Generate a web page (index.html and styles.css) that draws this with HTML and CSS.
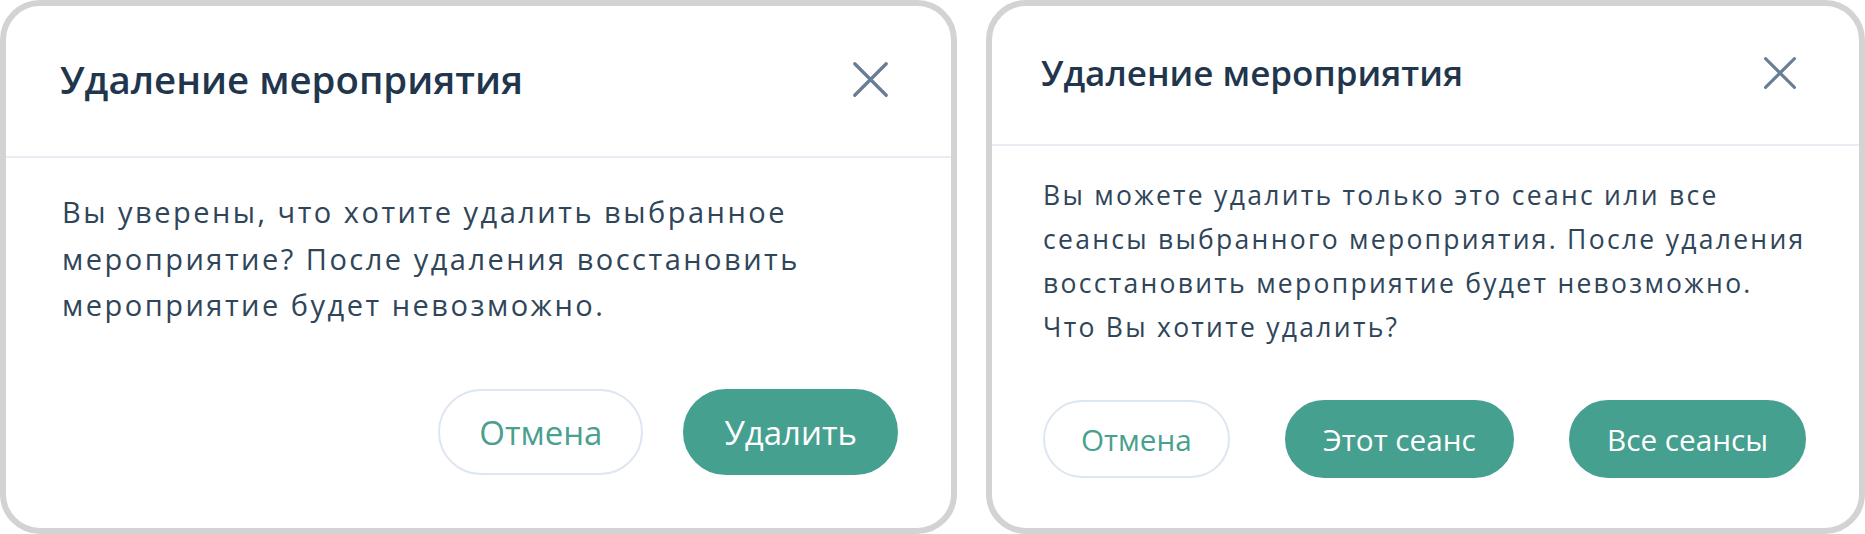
FILE: index.html
```html
<!DOCTYPE html>
<html lang="ru">
<head>
<meta charset="utf-8">
<title>Удаление мероприятия</title>
<link rel="stylesheet" href="styles.css">
</head>
<body>
<div class="page">
  <section class="dialog dialog--large">
    <header class="dialog__header">
      <h2 class="dialog__title">Удаление мероприятия</h2>
      <button class="dialog__close" aria-label="Закрыть">
        <svg viewBox="0 0 40 40" class="close-icon"><path d="M3 3 L37 37 M37 3 L3 37"/></svg>
      </button>
    </header>
    <div class="dialog__body">
      <p class="dialog__text">Вы уверены, что хотите удалить выбранное<br>мероприятие? После удаления восстановить<br>мероприятие будет невозможно.</p>
      <div class="dialog__actions dialog__actions--end">
        <button class="btn btn--outline">Отмена</button>
        <button class="btn btn--primary">Удалить</button>
      </div>
    </div>
  </section>
  <section class="dialog dialog--small">
    <header class="dialog__header">
      <h2 class="dialog__title">Удаление мероприятия</h2>
      <button class="dialog__close" aria-label="Закрыть">
        <svg viewBox="0 0 40 40" class="close-icon"><path d="M3 3 L37 37 M37 3 L3 37"/></svg>
      </button>
    </header>
    <div class="dialog__body">
      <p class="dialog__text">Вы можете удалить только это сеанс или все<br>сеансы выбранного мероприятия. После удаления<br>восстановить мероприятие будет невозможно.<br>Что Вы хотите удалить?</p>
      <div class="dialog__actions dialog__actions--spread">
        <button class="btn btn--outline">Отмена</button>
        <button class="btn btn--primary">Этот сеанс</button>
        <button class="btn btn--primary">Все сеансы</button>
      </div>
    </div>
  </section>
</div>
</body>
</html>
```
FILE: styles.css
```css
* { box-sizing: border-box; }
html, body { margin: 0; padding: 0; background: #ffffff; }
body { font-family: "Open Sans", "Noto Sans", sans-serif; color: #2c4257; }

.page {
  display: flex;
  gap: 29px;
  width: 1865px;
  height: 534px;
}

.dialog {
  height: 534px;
  background: #ffffff;
  border: 6px solid #d3d3d3;
  border-radius: 40px;
  display: flex;
  flex-direction: column;
}

.dialog__header {
  display: flex;
  align-items: center;
  justify-content: space-between;
  border-bottom: 2px solid #e8edf4;
}

.dialog__title {
  margin: 0;
  font-weight: 600;
  color: #1f364d;
  white-space: nowrap;
}

.dialog__close {
  border: 0;
  background: none;
  padding: 0;
  display: flex;
  cursor: pointer;
}

.close-icon { fill: none; stroke: #687e94; stroke-width: 3.6; stroke-linecap: round; }

.dialog__body { display: flex; flex-direction: column; flex: 1; }

.dialog__text {
  margin: 0;
  color: #2f4559;
  white-space: nowrap;
  letter-spacing: 0.086em;
}

.dialog__actions { display: flex; }
.dialog__actions--end { justify-content: flex-end; }
.dialog__actions--spread { justify-content: space-between; }

.btn {
  font-family: "Open Sans", "Noto Sans", sans-serif;
  border-radius: 999px;
  border: 2px solid transparent;
  cursor: pointer;
  white-space: nowrap;
}
.btn--outline { background: #ffffff; border-color: #dde6f1; color: #4aa08f; }
.btn--primary { background: #46a08f; border-color: #46a08f; color: #ffffff; }

/* large dialog */
.dialog--large { width: 957px; }
.dialog--large .dialog__header { height: 152px; padding: 0 62px 4px 54px; }
.dialog--large .dialog__title { font-size: 38.4px; line-height: 48px; }
.dialog--large .close-icon { width: 37px; height: 37px; }
.dialog--large .dialog__body { padding: 31px 53px 53px 56px; }
.dialog--large .dialog__text { font-size: 29px; line-height: 46.7px; }
.dialog--large .dialog__actions { margin-top: auto; gap: 40px; }
.dialog--large .btn { height: 86px; padding: 0 39px; font-size: 33px; }

/* small dialog */
.dialog--small { width: 879px; }
.dialog--small .dialog__header { height: 140px; padding: 0 62px 4px 49px; }
.dialog--small .dialog__title { font-size: 35px; line-height: 44px; }
.dialog--small .close-icon { width: 34px; height: 34px; }
.dialog--small .dialog__body { padding: 27px 53px 50px 51px; }
.dialog--small .dialog__text { font-size: 26.5px; line-height: 44px; }
.dialog--small .dialog__actions { margin-top: auto; }
.dialog--small .btn { height: 78px; padding: 0 36px; font-size: 29.7px; }
```
